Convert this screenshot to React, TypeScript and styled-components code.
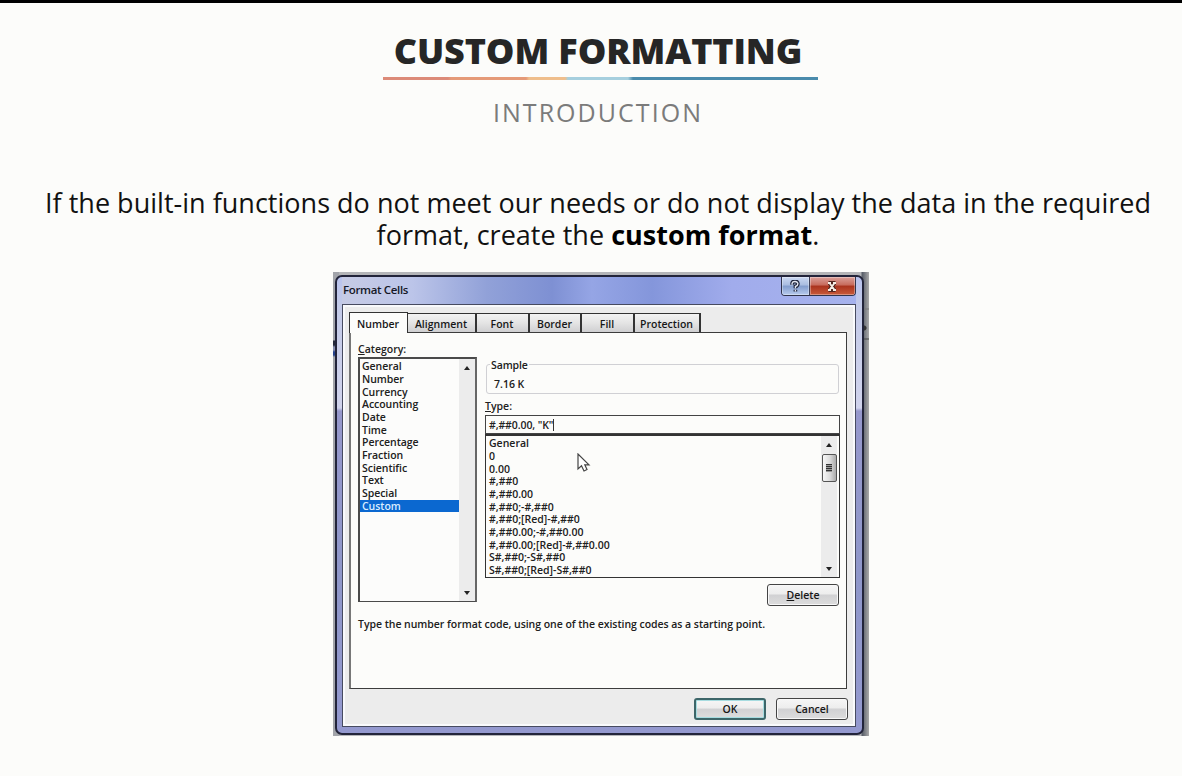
import React from "react";
import styled, { createGlobalStyle } from "styled-components";

const Global = createGlobalStyle`
  * { box-sizing: border-box; }
  body { margin: 0; background: #fcfcfa; font-family: "Open Sans", sans-serif; color: #111; overflow: hidden; }
`;
const Slide = styled.main`
  width: 1182px; height: 776px; border-top: 3px solid #000; background: #fcfcfa;
  padding-left: 14px; display: flex; flex-direction: column; align-items: center;
`;
const Title = styled.h1`
  margin: 21px 0 0; height: 53px; line-height: 54px; width: 435px; text-align: center;
  font-size: 36px; font-weight: 800; letter-spacing: -0.12px; color: #262626; white-space: nowrap;
`;
const Rule = styled.div`
  width: 435px; height: 3px; margin-left: 5px;
  background: linear-gradient(90deg, #dc8a78 0 65px, #e59a78 68px 143px, #efbe8c 146px 182px, #a6cfde 185px 245px, #4a8bac 250px);
`;
const Subtitle = styled.h2`
  margin: 14px 0 0; height: 36px; line-height: 37px; font-size: 25px; font-weight: 400;
  letter-spacing: 2.05px; color: #7b7b7b; white-space: nowrap;
`;
const Copy = styled.p`
  margin: 57px 0 0; height: 63px; line-height: 31.5px; font-size: 27px; letter-spacing: 0.015px; text-align: center; color: #111; white-space: nowrap;
  b { color: #000; }
`;
const Shot = styled.div`
  width: 536px; height: 464px; margin: 22px 0 0 319px; padding: 3px 5px 1px 2px; align-self: flex-start;
  background: linear-gradient(transparent 68px, #25293a 69px 73px, #858cae 75px 78px, #25428c 80px 83px, transparent 85px) 0 0 / 3px 100% no-repeat,
    radial-gradient(circle at 1px 56px, #333 2px, transparent 3px) 100% 0 / 6px 100% no-repeat,
    linear-gradient(transparent 36px, #777 37px, transparent 38px 66px, #444 67px, transparent 68px) 100% 0 / 6px 100% no-repeat,
    linear-gradient(90deg, #a2a4aa 0 6px, transparent 6px 528px, #555b66 529px, #aaa 536px), #b4b5b8;
`;
const Dialog = styled.section`
  width: 529px; height: 460px; border: 2px solid #22243a; border-radius: 7px;
  background: linear-gradient(180deg, #b9c3ee 0, #c3cae8 30px, #d0d3ec 131px, #9698cc 134px, #8f97ca 300px, #9499cf);
  padding: 0 6px 6px 5px; display: flex; flex-direction: column;
`;
const TitleBar = styled.header`
  height: 27px; flex: none; display: flex; justify-content: space-between; padding-left: 1px;
  background: linear-gradient(90deg, #c6cbe5 0, #bcc5e9 70px, #91a1d8 145px, #7e90d3 210px, #95a5e5 250px, #8496db 310px, #a1acec 390px, #a6b2ed);
`;
const Caption = styled.span`
  font-size: 11.5px; font-weight: 600; line-height: 25px; color: #151827; white-space: nowrap; letter-spacing: -0.35px;
`;
const WindowButtons = styled.div`
  display: flex; width: 75px; height: 19px; border: 1px solid #30344c; border-top: 0; border-radius: 0 0 4px 4px; overflow: hidden;
`;
const WindowButton = styled.button<{ $close?: boolean }>`
  border: 0; padding: 0; width: ${(p) => (p.$close ? 46 : 28)}px; display: grid; place-items: center;
  border-right: ${(p) => (p.$close ? 0 : 1)}px solid #3e4058;
  background: ${(p) => p.$close ? "linear-gradient(#dba09a, #c76a5b 45%, #aa321d 50%, #c85b3b)" : "linear-gradient(#cbd8f2, #a9bce0 45%, #829ccd 50%, #b8cbee)"};
  box-shadow: inset 0 0 0 1px #ffffff55;
`;
const Client = styled.div`
  flex: 1; border: 1px solid #474b60; background: #ececec; box-shadow: inset 0 0 0 2px #f9fafc;
  padding: 7px 7px 0 6px; display: flex; flex-direction: column;
`;
const Tabs = styled.nav`
  display: flex; height: 20px; align-items: flex-end;
`;
const Tab = styled.button<{ $w: number; $active?: boolean }>`
  width: ${(p) => p.$w}px; height: ${(p) => (p.$active ? 21 : 19)}px; flex: none;
  padding: ${(p) => (p.$active ? 1 : 2)}px 1px 0 0;
  margin-bottom: ${(p) => (p.$active ? -1 : 0)}px; position: relative;
  border: 1px solid #333; border-left-width: ${(p) => (p.$active ? 1 : 0)}px; border-right-width: ${(p) => (p.$active ? 1 : 2)}px; border-bottom: 0;
  background: ${(p) => (p.$active ? "#fcfcfb" : "linear-gradient(#f3f3f3, #e4e4e4 50%, #cfcfd1)")};
  font: 600 10.5px/16px "Open Sans", sans-serif; color: #171717;
`;
const Page = styled.div`
  width: 498px; height: 357px; border: 1px solid #3c3c3c; border-left: 2px solid #777; background: #fcfcfa; padding: 0 7px 0 7px;
`;
const Columns = styled.div` display: flex; gap: 8px; height: 274px; `;
const CategoryColumn = styled.div` width: 119px; padding-top: 8px; flex: none; `;
const Label = styled.div<{ $h: number; $drop?: number }>`
  height: ${(p) => p.$h}px; padding-top: ${(p) => p.$drop ?? 0}px; line-height: 16px; font-size: 10.5px; font-weight: 600; color: #222; white-space: nowrap;
`;
const CategoryBox = styled.div`
  width: 119px; height: 245px; border: 2px solid #4a4a4a; border-right-color: #666; border-bottom-width: 1px; display: flex; background: #fcfcfb;
`;
const Options = styled.ul<{ $inset?: number }>`
  flex: 1; min-width: 0; margin: 0; padding: 1.4px 0 0 ${(p) => p.$inset ?? 0}px; list-style: none;
`;
const Option = styled.li<{ $selected?: boolean; $ls?: number }>`
  height: 12.67px; line-height: 13px; padding-left: 2px; font-size: 10.5px; font-weight: 600; white-space: nowrap;
  letter-spacing: ${(p) => p.$ls ?? 0}px;
  color: ${(p) => (p.$selected ? "#d9edff" : "#202020")};
  background: ${(p) => (p.$selected ? "#0b68d0" : "transparent")};
`;
const Scroll = styled.div`
  width: 16px; flex: none; background: #ececec; display: flex; flex-direction: column; align-items: center; padding: 7px 0 6px;
`;
const Arrow = styled.i<{ $down?: boolean }>`
  width: 0; height: 0; border: 3.5px solid transparent; border-top-width: ${(p) => (p.$down ? 4 : 0)}px; border-bottom-width: ${(p) => (p.$down ? 0 : 4)}px;
  ${(p) => (p.$down ? "border-top-color: #222; margin-top: auto;" : "border-bottom-color: #222;")}
`;
const Thumb = styled.span`
  width: 15px; height: 28px; margin-top: 7px; border: 1px solid #555; border-radius: 2px; background: linear-gradient(90deg, #f8f8f8, #dedede 50%, #aaa);
  display: grid; place-items: center;
`;
const Grip = styled.span`
  width: 6px; height: 8px; background: repeating-linear-gradient(#333 0 1px, #999 1px 2px);
`;
const Details = styled.div` width: 355px; flex: none; display: flex; flex-direction: column; padding-top: 31px; `;
const Sample = styled.div`
  width: 353px; height: 30px; margin-left: 1px; border: 1px solid #d0d0d4; border-radius: 3px; position: relative;
  font-size: 10.5px; font-weight: 600; line-height: 15px; color: #202020; padding: 12px 0 0 7px;
`;
const Legend = styled.span` position: absolute; left: 3px; top: -7px; padding: 0 1px; background: #fcfcfa; letter-spacing: -0.1px; `;
const Input = styled.div`
  height: 19px; border: 1px solid #444; padding-left: 3px; font-size: 10.5px; font-weight: 600; white-space: nowrap; color: #222;
  letter-spacing: -0.1px; display: flex; align-items: center;
`;
const Caret = styled.i` width: 1px; height: 12px; background: #333; `;
const FormatBox = styled.div`
  height: 144px; border: 1px solid #333; border-top-width: 2px; display: flex; padding-right: 2px; position: relative;
`;
const Pointer = styled.svg` position: absolute; left: 91px; top: 17px; `;
const Button = styled.button<{ $primary?: boolean }>`
  width: 72px; height: 22px; padding: 0; flex: none; border: ${(p) => (p.$primary ? "2px solid #3d6669" : "1px solid #444")}; border-radius: 3px;
  background: linear-gradient(#f6f6f6, #ededed 45%, #d1d1d3 50%, #dddddd); color: #171717;
  box-shadow: inset 0 0 0 1px ${(p) => (p.$primary ? "#a7dce0" : "#f8f8f8")};
  font: 600 10.5px/18px "Open Sans", sans-serif;
`;
const DeleteRow = styled.div` display: flex; justify-content: flex-end; padding: 6px 1px 0 0; `;
const Description = styled.p`
  margin: 8px 0 0; font-size: 10.5px; line-height: 18px; font-weight: 600; color: #202020; white-space: nowrap; letter-spacing: -0.04px;
`;
const Footer = styled.footer` display: flex; justify-content: flex-end; gap: 10px; margin-top: 9px; `;

const categories = [
  "General", "Number", "Currency", "Accounting", "Date", "Time",
  "Percentage", "Fraction", "Scientific", "Text", "Special", "Custom",
];
const formats = [
  "General", "0", "0.00", "#,##0", "#,##0.00", "#,##0;-#,##0", "#,##0;[Red]-#,##0",
  "#,##0.00;-#,##0.00", "#,##0.00;[Red]-#,##0.00", "S#,##0;-S#,##0", "S#,##0;[Red]-S#,##0",
];

export default function App() {
  return (
    <>
      <Global />
      <Slide>
        <Title>CUSTOM FORMATTING</Title>
        <Rule />
        <Subtitle>INTRODUCTION</Subtitle>
        <Copy>
          If the built-in functions do not meet our needs or do not display the data in the required
          <br />
          format, create the <b>custom format</b>.
        </Copy>
        <Shot>
          <Dialog>
            <TitleBar>
              <Caption>Format Cells</Caption>
              <WindowButtons>
                <WindowButton>
                  <svg width="10" height="13" viewBox="0 0 12 14" preserveAspectRatio="none" fill="none">
                    <path d="M2.5 5V3.5Q3 1.5 6 1.5T9.5 4Q9.5 6 6.5 7V9M6.5 10.5V12.5" stroke="#20263e" strokeWidth="4.4" />
                    <path d="M2.5 5V3.5Q3 1.5 6 1.5T9.5 4Q9.5 6 6.5 7V9M6.5 10.5V12.5" stroke="#e4e7f0" strokeWidth="1.6" />
                  </svg>
                </WindowButton>
                <WindowButton $close>
                  <svg width="12" height="11" viewBox="0 0 12 11">
                    <path d="M2.5 1.5H9.5M2.5 9.5H9.5M3.5 2L8.5 9M8.5 2L3.5 9" stroke="#52251f" strokeWidth="4" />
                    <path d="M2 2H5M7 2H10M2 9H5M7 9H10M3.5 2L8.5 9M8.5 2L3.5 9" stroke="#f6eee6" strokeWidth="1.8" />
                  </svg>
                </WindowButton>
              </WindowButtons>
            </TitleBar>
            <Client>
              <Tabs>
                <Tab $w={59} $active>Number</Tab>
                <Tab $w={69}>Alignment</Tab>
                <Tab $w={53}>Font</Tab>
                <Tab $w={52}>Border</Tab>
                <Tab $w={53}>Fill</Tab>
                <Tab $w={66}>Protection</Tab>
              </Tabs>
              <Page>
                <Columns>
                  <CategoryColumn>
                    <Label $h={16}><u>C</u>ategory:</Label>
                    <CategoryBox>
                      <Options>
                        {categories.map((name) => (
                          <Option key={name} $ls={-0.05} $selected={name === "Custom"}>{name}</Option>
                        ))}
                      </Options>
                      <Scroll><Arrow /><Arrow $down /></Scroll>
                    </CategoryBox>
                  </CategoryColumn>
                  <Details>
                    <Sample>
                      <Legend>Sample</Legend>
                      7.16 K
                    </Sample>
                    <Label $h={21} $drop={4}><u>T</u>ype:</Label>
                    <Input>#,##0.00, "K"<Caret /></Input>
                    <FormatBox>
                      <Options $inset={1}>
                        {formats.map((code) => <Option key={code}>{code}</Option>)}
                      </Options>
                      <Scroll><Arrow /><Thumb><Grip /></Thumb><Arrow $down /></Scroll>
                      <Pointer width="15" height="20" viewBox="0 0 15 20">
                        <path d="M1 1V16L4.5 12.8L7 18L10 16.5L7.8 11.8H12Z" fill="#fff" stroke="#444" strokeWidth="1.2" />
                      </Pointer>
                    </FormatBox>
                    <DeleteRow><Button><u>D</u>elete</Button></DeleteRow>
                  </Details>
                </Columns>
                <Description>Type the number format code, using one of the existing codes as a starting point.</Description>
              </Page>
              <Footer><Button $primary>OK</Button><Button>Cancel</Button></Footer>
            </Client>
          </Dialog>
        </Shot>
      </Slide>
    </>
  );
}
